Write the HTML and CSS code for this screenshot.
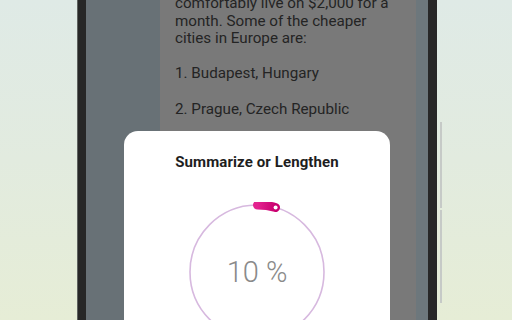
FILE: index.html
```html
<!DOCTYPE html>
<html>
<head>
<meta charset="utf-8">
<link rel="stylesheet" href="styles.css">
</head>
<body>
<div class="stage">
  <div class="phone">
    <div class="screen">
      <div class="panel-left"></div>
      <div class="content">
        <p>comfortably live on $2,000 for a month. Some of the cheaper cities in Europe are:</p>
        <p>1. Budapest, Hungary</p>
        <p>2. Prague, Czech Republic</p>
      </div>
      <div class="edge-right"></div>
      <div class="modal">
        <div class="modal-title">Summarize or Lengthen</div>
        <div class="dial">
          <svg class="dial-svg" width="140" height="140" viewBox="0 0 140 140">
            <defs>
              <linearGradient id="thumb" x1="0" y1="0" x2="1" y2="0">
                <stop offset="0" stop-color="#e3238f"/>
                <stop offset="1" stop-color="#c9006f"/>
              </linearGradient>
            </defs>
            <circle cx="70" cy="70" r="67" fill="none" stroke="#d7b9df" stroke-width="1.6"/>
            <path d="M70.5 3 A67 67 0 0 1 88.5 5.5" fill="none" stroke="url(#thumb)" stroke-width="9" stroke-linecap="round"/>
            <circle cx="88.6" cy="5.6" r="2" fill="#fff"/>
          </svg>
          <div class="dial-value">10 %</div>
        </div>
      </div>
    </div>
  </div>
  <div class="side-buttons">
    <div class="btn btn-a"></div>
    <div class="btn btn-b"></div>
  </div>
</div>
</body>
</html>
```
FILE: styles.css
```css
html, body {
  margin: 0;
  padding: 0;
}
body {
  width: 512px;
  height: 320px;
  overflow: hidden;
  background: linear-gradient(180deg, #dfeae6 0%, #e2ebdf 50%, #e6edd6 100%);
  font-family: Roboto, "Noto Sans", sans-serif;
}
.stage {
  display: flex;
  align-items: flex-start;
  height: 320px;
}
.phone {
  margin-left: 77px;
  width: 342px;
  height: 320px;
  background: #272727;
  border-left: 1px solid #5f6360;
  padding: 0 9px 0 8px;
}
.screen {
  position: relative;
  display: flex;
  height: 320px;
  overflow: hidden;
}
.panel-left {
  width: 74px;
  flex: none;
  background: #687176;
}
.content {
  width: 218px;
  flex: none;
  background: #797979;
  padding-left: 15px;
  padding-right: 23px;
  color: #242424;
  font-size: 15.2px;
  line-height: 17.6px;
  margin-top: -5px;
  padding-top: 0;
  box-sizing: content-box;
  height: 325px;
}
.content p {
  margin: 0 0 17.6px 0;
}
.edge-right {
  flex: 1;
  background: #6d777c;
}
.modal {
  position: absolute;
  left: 38px;
  top: 131px;
  width: 266px;
  height: 220px;
  background: #ffffff;
  border-radius: 14px;
  display: flex;
  flex-direction: column;
  align-items: center;
}
.modal-title {
  margin-top: 21px;
  font-size: 15px;
  line-height: 20px;
  font-weight: 700;
  color: #1e1e1e;
  letter-spacing: 0.1px;
}
.dial {
  position: relative;
  margin-top: 30px;
  width: 140px;
  height: 140px;
}
.dial-svg {
  display: block;
}
.dial-value {
  position: absolute;
  left: 0;
  right: 0;
  top: 53px;
  text-align: center;
  font-size: 29px;
  line-height: 34px;
  font-weight: 300;
  color: #8a8a8a;
}
.side-buttons {
  display: flex;
  flex-direction: column;
  margin-left: 3px;
}
.btn {
  width: 2px;
  background: #c6cac7;
}
.btn-a {
  margin-top: 122px;
  height: 86px;
}
.btn-b {
  margin-top: 2px;
  height: 93px;
}
```
